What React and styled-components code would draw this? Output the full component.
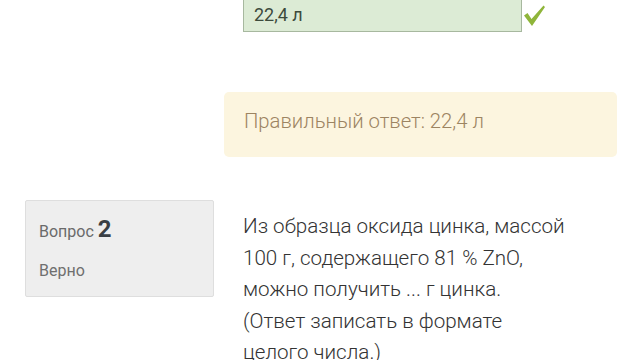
import styled, { createGlobalStyle } from "styled-components";

const GlobalStyle = createGlobalStyle`
  html, body {
    margin: 0;
    padding: 0;
    background: #ffffff;
    font-family: Roboto, "Noto Sans", sans-serif;
    overflow: hidden;
  }
`;

const Page = styled.div`
  width: 640px;
  height: 360px;
  overflow: hidden;
  padding-left: 25px;
  box-sizing: border-box;
`;

const QuestionRow = styled.div`
  display: flex;
  align-items: flex-start;
  gap: 10px;
  margin-top: ${(p) => p.$top || 0}px;
`;

const InfoBox = styled.div`
  width: 189px;
  height: 97px;
  flex-shrink: 0;
  box-sizing: border-box;
  background: #eeeeee;
  border: 1px solid #dedede;
  border-radius: 2px;
  padding: 14px 13px;
  visibility: ${(p) => (p.$hidden ? "hidden" : "visible")};
`;

const QNumber = styled.div`
  font-size: 16px;
  color: #6a6a6a;
  line-height: 28px;

  b {
    font-size: 24px;
    font-weight: 700;
    color: #3a3f44;
  }
`;

const State = styled.div`
  font-size: 16px;
  color: #6f6f6f;
  margin-top: 15px;
`;

const Content = styled.div`
  width: 393px;
  display: flex;
  flex-direction: column;
`;

const Formulation = styled.div`
  padding-left: 19px;
  margin-top: ${(p) => p.$top || 0}px;
  color: #333333;
  font-size: 20.6px;
  font-weight: 300;
  line-height: 31.5px;
`;

const AnswerRow = styled.div`
  display: flex;
  align-items: flex-end;
  gap: 1px;
  margin-top: -8px;
`;

const AnswerInput = styled.div`
  width: 279px;
  height: 40px;
  box-sizing: border-box;
  background: #dcebd5;
  border: 1px solid #a7b89f;
  padding: 10px 10px 0;
  font-size: 18px;
  font-weight: 400;
  line-height: 24px;
  color: #3c4a3c;
`;

const CheckIcon = styled.svg`
  margin-bottom: 5px;
`;

const Feedback = styled.div`
  margin-top: 60px;
  height: 65px;
  box-sizing: border-box;
  background: #fcf5df;
  border-radius: 5px;
  padding: 0 20px 8px;
  display: flex;
  align-items: center;
  font-size: 20.3px;
  font-weight: 300;
  color: #9c8462;
`;

const Check = () => (
  <CheckIcon width="23" height="22" viewBox="0 0 23 22">
    <path d="M1 10.5 L4.5 8 L8.5 14 L20.5 0.5 L22 2 L9 21 Z" fill="#8fb53a" />
  </CheckIcon>
);

export default function App() {
  return (
    <>
      <GlobalStyle />
      <Page>
        <QuestionRow>
          <InfoBox $hidden />
          <Content>
            <Formulation>
              <AnswerRow>
                <AnswerInput>22,4 л</AnswerInput>
                <Check />
              </AnswerRow>
            </Formulation>
            <Feedback>Правильный ответ: 22,4 л</Feedback>
          </Content>
        </QuestionRow>
        <QuestionRow $top={43}>
          <InfoBox>
            <QNumber>
              Вопрос <b>2</b>
            </QNumber>
            <State>Верно</State>
          </InfoBox>
          <Content>
            <Formulation $top={11}>
              Из образца оксида цинка, массой
              <br />
              100 г, содержащего 81 % ZnO,
              <br />
              можно получить ... г цинка.
              <br />
              (Ответ записать в формате
              <br />
              целого числа.)
            </Formulation>
          </Content>
        </QuestionRow>
      </Page>
    </>
  );
}
